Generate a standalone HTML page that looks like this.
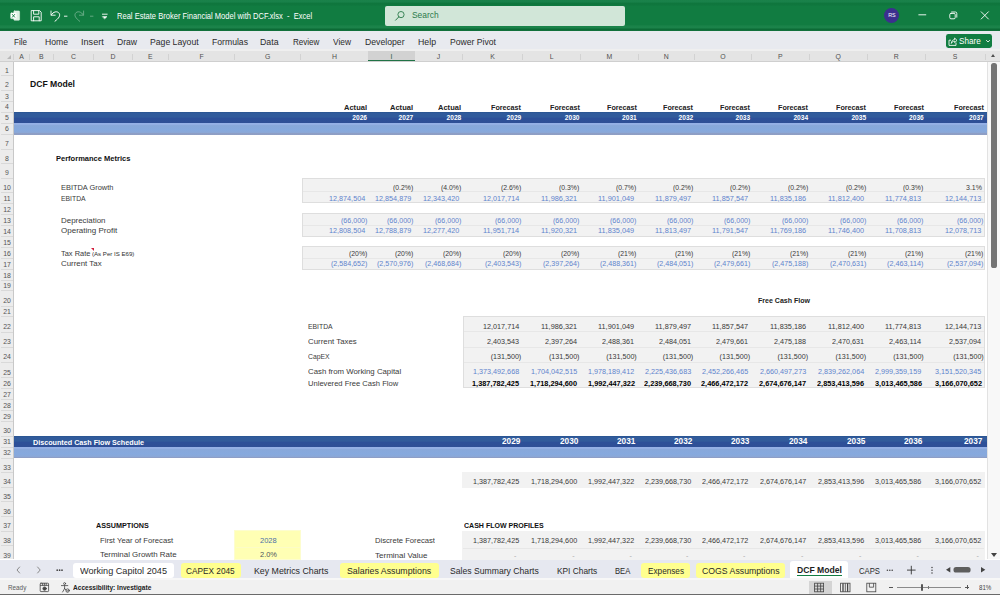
<!DOCTYPE html>
<html lang="en"><head><meta charset="utf-8"><title>Real Estate Broker Financial Model with DCF.xlsx - Excel</title>
<style>
html,body{margin:0;padding:0;}
body{width:1000px;height:595px;position:relative;overflow:hidden;background:#fff;font-family:"Liberation Sans",sans-serif;}
.t{position:absolute;white-space:pre;color:#333;transform-origin:0 50%;}
.b{position:absolute;}
div{position:absolute;left:0;top:0;}
#sheet{width:987px;height:559.5px;overflow:hidden;}
</style></head>
<body>
<div id="sheet">
<div class="b " style="left:13.50px;top:111.80px;width:973.50px;height:11.20px;background:linear-gradient(to bottom,#29548f 0,#315b9c 1.5px,#315b9b 5px,#2d5099 6.5px,#2f4f96 100%);"></div>
<div class="b " style="left:13.50px;top:123.00px;width:973.50px;height:11.50px;background:linear-gradient(to bottom,#95b1e7 0,#93afe4 1.5px,#88a8da 2.6px,#86a9de 7px,#8aa8d8 9.4px,#8d9ec6 10.4px,#8f9fc4 100%);"></div>
<div class="b " style="left:13.50px;top:435.80px;width:973.50px;height:11.00px;background:linear-gradient(to bottom,#29548f 0,#315b9c 1.5px,#315b9b 5px,#2d5099 6.5px,#2f4f96 100%);"></div>
<div class="b " style="left:13.50px;top:446.80px;width:973.50px;height:11.50px;background:linear-gradient(to bottom,#95b1e7 0,#93afe4 1.5px,#88a8da 2.6px,#86a9de 7px,#8aa8d8 9.4px,#8d9ec6 10.4px,#8f9fc4 100%);"></div>
<div class="b " style="left:301.70px;top:178.20px;width:683.30px;height:24.80px;background:#f2f2f2;border:1px solid #dedede;box-sizing:border-box;"></div>
<div class="b " style="left:302.70px;top:191.30px;width:681.30px;height:1.00px;background:#e7e7e7;"></div>
<div class="b " style="left:301.70px;top:213.40px;width:683.30px;height:23.30px;background:#f2f2f2;border:1px solid #dedede;box-sizing:border-box;"></div>
<div class="b " style="left:302.70px;top:225.10px;width:681.30px;height:1.00px;background:#e7e7e7;"></div>
<div class="b " style="left:301.70px;top:246.40px;width:683.30px;height:23.60px;background:#f2f2f2;border:1px solid #dedede;box-sizing:border-box;"></div>
<div class="b " style="left:302.70px;top:258.30px;width:681.30px;height:1.00px;background:#e7e7e7;"></div>
<div class="b " style="left:463.00px;top:316.20px;width:522.00px;height:71.70px;background:#f2f2f2;border:1px solid #dedede;box-sizing:border-box;"></div>
<div class="b " style="left:464.00px;top:331.10px;width:520.00px;height:1.00px;background:#e7e7e7;"></div>
<div class="b " style="left:464.00px;top:346.50px;width:520.00px;height:1.00px;background:#e7e7e7;"></div>
<div class="b " style="left:464.00px;top:361.80px;width:520.00px;height:1.00px;background:#e7e7e7;"></div>
<div class="b " style="left:462.00px;top:471.80px;width:523.00px;height:15.80px;background:#f2f2f2;"></div>
<div class="b " style="left:462.00px;top:531.20px;width:523.00px;height:29.30px;background:#f2f2f2;"></div>
<div class="b " style="left:463.00px;top:547.50px;width:521.00px;height:1.00px;background:#e7e7e7;"></div>
<div class="b " style="left:234.20px;top:530.20px;width:67.00px;height:30.30px;background:#ffffb4;border:1.5px solid #fdfdcf;box-sizing:border-box;"></div>
<div class="b " style="left:235.50px;top:547.00px;width:64.50px;height:1.00px;background:#fcfcc6;"></div>
<span class="t " style="left:30.40px;top:79.00px;font-size:9px;line-height:11.7px;transform:scaleX(0.957);color:#111;font-weight:700;">DCF Model</span>
<span class="t " style="left:55.60px;top:154.00px;font-size:7.4px;line-height:9.62px;transform:scaleX(1.017);color:#111;font-weight:700;">Performance Metrics</span>
<span class="t " style="left:344.05px;top:103.00px;font-size:7.7px;line-height:10.01px;transform:scaleX(0.979);color:#222;font-weight:700;">Actual</span>
<span class="t " style="left:390.30px;top:103.00px;font-size:7.7px;line-height:10.01px;transform:scaleX(0.979);color:#222;font-weight:700;">Actual</span>
<span class="t " style="left:438.30px;top:103.00px;font-size:7.7px;line-height:10.01px;transform:scaleX(0.979);color:#222;font-weight:700;">Actual</span>
<span class="t " style="left:491.30px;top:103.00px;font-size:7.7px;line-height:10.01px;transform:scaleX(0.936);color:#222;font-weight:700;">Forecast</span>
<span class="t " style="left:549.55px;top:103.00px;font-size:7.7px;line-height:10.01px;transform:scaleX(0.936);color:#222;font-weight:700;">Forecast</span>
<span class="t " style="left:606.80px;top:103.00px;font-size:7.7px;line-height:10.01px;transform:scaleX(0.936);color:#222;font-weight:700;">Forecast</span>
<span class="t " style="left:663.30px;top:103.00px;font-size:7.7px;line-height:10.01px;transform:scaleX(0.936);color:#222;font-weight:700;">Forecast</span>
<span class="t " style="left:720.20px;top:103.00px;font-size:7.7px;line-height:10.01px;transform:scaleX(0.936);color:#222;font-weight:700;">Forecast</span>
<span class="t " style="left:778.10px;top:103.00px;font-size:7.7px;line-height:10.01px;transform:scaleX(0.936);color:#222;font-weight:700;">Forecast</span>
<span class="t " style="left:836.10px;top:103.00px;font-size:7.7px;line-height:10.01px;transform:scaleX(0.936);color:#222;font-weight:700;">Forecast</span>
<span class="t " style="left:893.80px;top:103.00px;font-size:7.7px;line-height:10.01px;transform:scaleX(0.936);color:#222;font-weight:700;">Forecast</span>
<span class="t " style="left:953.80px;top:103.00px;font-size:7.7px;line-height:10.01px;transform:scaleX(0.936);color:#222;font-weight:700;">Forecast</span>
<span class="t " style="left:352.35px;top:114.00px;font-size:6.6px;line-height:8.58px;color:#fff;font-weight:700;">2026</span>
<span class="t " style="left:398.60px;top:114.00px;font-size:6.6px;line-height:8.58px;color:#fff;font-weight:700;">2027</span>
<span class="t " style="left:446.60px;top:114.00px;font-size:6.6px;line-height:8.58px;color:#fff;font-weight:700;">2028</span>
<span class="t " style="left:506.60px;top:114.00px;font-size:6.6px;line-height:8.58px;color:#fff;font-weight:700;">2029</span>
<span class="t " style="left:564.85px;top:114.00px;font-size:6.6px;line-height:8.58px;color:#fff;font-weight:700;">2030</span>
<span class="t " style="left:622.10px;top:114.00px;font-size:6.6px;line-height:8.58px;color:#fff;font-weight:700;">2031</span>
<span class="t " style="left:678.60px;top:114.00px;font-size:6.6px;line-height:8.58px;color:#fff;font-weight:700;">2032</span>
<span class="t " style="left:735.50px;top:114.00px;font-size:6.6px;line-height:8.58px;color:#fff;font-weight:700;">2033</span>
<span class="t " style="left:793.40px;top:114.00px;font-size:6.6px;line-height:8.58px;color:#fff;font-weight:700;">2034</span>
<span class="t " style="left:851.40px;top:114.00px;font-size:6.6px;line-height:8.58px;color:#fff;font-weight:700;">2035</span>
<span class="t " style="left:909.10px;top:114.00px;font-size:6.6px;line-height:8.58px;color:#fff;font-weight:700;">2036</span>
<span class="t " style="left:969.10px;top:114.00px;font-size:6.6px;line-height:8.58px;color:#fff;font-weight:700;">2037</span>
<span class="t " style="left:60.60px;top:184.00px;font-size:7.15px;line-height:9.29px;transform:scaleX(1.040);color:#3a3a3a;">EBITDA Growth</span>
<span class="t " style="left:60.60px;top:195.00px;font-size:7.15px;line-height:9.29px;transform:scaleX(0.957);color:#3a3a3a;">EBITDA</span>
<span class="t " style="left:60.60px;top:217.00px;font-size:7.15px;line-height:9.29px;transform:scaleX(1.110);color:#3a3a3a;">Depreciation</span>
<span class="t " style="left:60.60px;top:227.00px;font-size:7.15px;line-height:9.29px;transform:scaleX(1.124);color:#3a3a3a;">Operating Profit</span>
<span class="t " style="left:60.60px;top:250.00px;font-size:7.15px;line-height:9.29px;transform:scaleX(1.043);color:#3a3a3a;">Tax Rate</span>
<span class="t " style="left:92.40px;top:251.00px;font-size:5.9px;line-height:7.67px;transform:scaleX(1.034);color:#2e2e2e;">(As Per IS E69)</span>
<span class="t " style="left:60.60px;top:260.00px;font-size:7.15px;line-height:9.29px;transform:scaleX(1.104);color:#3a3a3a;">Current Tax</span>
<div class="b" style="left:90.7px;top:247.6px;width:0;height:0;border-left:3.1px solid transparent;border-top:3.1px solid #d21f3c;"></div>
<span class="t " style="left:392.97px;top:184.00px;font-size:7.15px;line-height:9.29px;transform:scaleX(0.961);color:#3a3a3a;">(0.2%)</span>
<span class="t " style="left:440.97px;top:184.00px;font-size:7.15px;line-height:9.29px;transform:scaleX(0.961);color:#3a3a3a;">(4.0%)</span>
<span class="t " style="left:500.97px;top:184.00px;font-size:7.15px;line-height:9.29px;transform:scaleX(0.961);color:#3a3a3a;">(2.6%)</span>
<span class="t " style="left:559.22px;top:184.00px;font-size:7.15px;line-height:9.29px;transform:scaleX(0.961);color:#3a3a3a;">(0.3%)</span>
<span class="t " style="left:616.47px;top:184.00px;font-size:7.15px;line-height:9.29px;transform:scaleX(0.961);color:#3a3a3a;">(0.7%)</span>
<span class="t " style="left:672.97px;top:184.00px;font-size:7.15px;line-height:9.29px;transform:scaleX(0.961);color:#3a3a3a;">(0.2%)</span>
<span class="t " style="left:729.87px;top:184.00px;font-size:7.15px;line-height:9.29px;transform:scaleX(0.961);color:#3a3a3a;">(0.2%)</span>
<span class="t " style="left:787.77px;top:184.00px;font-size:7.15px;line-height:9.29px;transform:scaleX(0.961);color:#3a3a3a;">(0.2%)</span>
<span class="t " style="left:845.77px;top:184.00px;font-size:7.15px;line-height:9.29px;transform:scaleX(0.961);color:#3a3a3a;">(0.2%)</span>
<span class="t " style="left:903.47px;top:184.00px;font-size:7.15px;line-height:9.29px;transform:scaleX(0.961);color:#3a3a3a;">(0.3%)</span>
<span class="t " style="left:965.61px;top:184.00px;font-size:7.15px;line-height:9.29px;transform:scaleX(0.982);color:#3a3a3a;">3.1%</span>
<span class="t " style="left:328.63px;top:195.00px;font-size:7.15px;line-height:9.29px;transform:scaleX(1.013);color:#5f84cd;">12,874,504</span>
<span class="t " style="left:374.88px;top:195.00px;font-size:7.15px;line-height:9.29px;transform:scaleX(1.013);color:#5f84cd;">12,854,879</span>
<span class="t " style="left:422.88px;top:195.00px;font-size:7.15px;line-height:9.29px;transform:scaleX(1.013);color:#5f84cd;">12,343,420</span>
<span class="t " style="left:482.88px;top:195.00px;font-size:7.15px;line-height:9.29px;transform:scaleX(1.013);color:#5f84cd;">12,017,714</span>
<span class="t " style="left:541.13px;top:195.00px;font-size:7.15px;line-height:9.29px;transform:scaleX(1.028);color:#5f84cd;">11,986,321</span>
<span class="t " style="left:598.38px;top:195.00px;font-size:7.15px;line-height:9.29px;transform:scaleX(1.028);color:#5f84cd;">11,901,049</span>
<span class="t " style="left:654.88px;top:195.00px;font-size:7.15px;line-height:9.29px;transform:scaleX(1.028);color:#5f84cd;">11,879,497</span>
<span class="t " style="left:711.78px;top:195.00px;font-size:7.15px;line-height:9.29px;transform:scaleX(1.028);color:#5f84cd;">11,857,547</span>
<span class="t " style="left:769.68px;top:195.00px;font-size:7.15px;line-height:9.29px;transform:scaleX(1.028);color:#5f84cd;">11,835,186</span>
<span class="t " style="left:827.68px;top:195.00px;font-size:7.15px;line-height:9.29px;transform:scaleX(1.028);color:#5f84cd;">11,812,400</span>
<span class="t " style="left:885.38px;top:195.00px;font-size:7.15px;line-height:9.29px;transform:scaleX(1.028);color:#5f84cd;">11,774,813</span>
<span class="t " style="left:945.38px;top:195.00px;font-size:7.15px;line-height:9.29px;transform:scaleX(1.013);color:#5f84cd;">12,144,713</span>
<span class="t " style="left:340.52px;top:217.00px;font-size:7.15px;line-height:9.29px;transform:scaleX(0.993);color:#5f84cd;">(66,000)</span>
<span class="t " style="left:386.77px;top:217.00px;font-size:7.15px;line-height:9.29px;transform:scaleX(0.993);color:#5f84cd;">(66,000)</span>
<span class="t " style="left:434.77px;top:217.00px;font-size:7.15px;line-height:9.29px;transform:scaleX(0.993);color:#5f84cd;">(66,000)</span>
<span class="t " style="left:494.77px;top:217.00px;font-size:7.15px;line-height:9.29px;transform:scaleX(0.993);color:#5f84cd;">(66,000)</span>
<span class="t " style="left:553.02px;top:217.00px;font-size:7.15px;line-height:9.29px;transform:scaleX(0.993);color:#5f84cd;">(66,000)</span>
<span class="t " style="left:610.27px;top:217.00px;font-size:7.15px;line-height:9.29px;transform:scaleX(0.993);color:#5f84cd;">(66,000)</span>
<span class="t " style="left:666.77px;top:217.00px;font-size:7.15px;line-height:9.29px;transform:scaleX(0.993);color:#5f84cd;">(66,000)</span>
<span class="t " style="left:723.67px;top:217.00px;font-size:7.15px;line-height:9.29px;transform:scaleX(0.993);color:#5f84cd;">(66,000)</span>
<span class="t " style="left:781.57px;top:217.00px;font-size:7.15px;line-height:9.29px;transform:scaleX(0.993);color:#5f84cd;">(66,000)</span>
<span class="t " style="left:839.57px;top:217.00px;font-size:7.15px;line-height:9.29px;transform:scaleX(0.993);color:#5f84cd;">(66,000)</span>
<span class="t " style="left:897.27px;top:217.00px;font-size:7.15px;line-height:9.29px;transform:scaleX(0.993);color:#5f84cd;">(66,000)</span>
<span class="t " style="left:957.27px;top:217.00px;font-size:7.15px;line-height:9.29px;transform:scaleX(0.993);color:#5f84cd;">(66,000)</span>
<span class="t " style="left:328.63px;top:227.00px;font-size:7.15px;line-height:9.29px;transform:scaleX(1.013);color:#5f84cd;">12,808,504</span>
<span class="t " style="left:374.88px;top:227.00px;font-size:7.15px;line-height:9.29px;transform:scaleX(1.013);color:#5f84cd;">12,788,879</span>
<span class="t " style="left:422.88px;top:227.00px;font-size:7.15px;line-height:9.29px;transform:scaleX(1.013);color:#5f84cd;">12,277,420</span>
<span class="t " style="left:482.88px;top:227.00px;font-size:7.15px;line-height:9.29px;transform:scaleX(1.028);color:#5f84cd;">11,951,714</span>
<span class="t " style="left:541.13px;top:227.00px;font-size:7.15px;line-height:9.29px;transform:scaleX(1.028);color:#5f84cd;">11,920,321</span>
<span class="t " style="left:598.38px;top:227.00px;font-size:7.15px;line-height:9.29px;transform:scaleX(1.028);color:#5f84cd;">11,835,049</span>
<span class="t " style="left:654.88px;top:227.00px;font-size:7.15px;line-height:9.29px;transform:scaleX(1.028);color:#5f84cd;">11,813,497</span>
<span class="t " style="left:711.78px;top:227.00px;font-size:7.15px;line-height:9.29px;transform:scaleX(1.028);color:#5f84cd;">11,791,547</span>
<span class="t " style="left:769.68px;top:227.00px;font-size:7.15px;line-height:9.29px;transform:scaleX(1.028);color:#5f84cd;">11,769,186</span>
<span class="t " style="left:827.68px;top:227.00px;font-size:7.15px;line-height:9.29px;transform:scaleX(1.028);color:#5f84cd;">11,746,400</span>
<span class="t " style="left:885.38px;top:227.00px;font-size:7.15px;line-height:9.29px;transform:scaleX(1.028);color:#5f84cd;">11,708,813</span>
<span class="t " style="left:945.38px;top:227.00px;font-size:7.15px;line-height:9.29px;transform:scaleX(1.013);color:#5f84cd;">12,078,713</span>
<span class="t " style="left:348.62px;top:250.00px;font-size:7.15px;line-height:9.29px;transform:scaleX(0.961);color:#3a3a3a;">(20%)</span>
<span class="t " style="left:394.87px;top:250.00px;font-size:7.15px;line-height:9.29px;transform:scaleX(0.961);color:#3a3a3a;">(20%)</span>
<span class="t " style="left:442.87px;top:250.00px;font-size:7.15px;line-height:9.29px;transform:scaleX(0.961);color:#3a3a3a;">(20%)</span>
<span class="t " style="left:502.87px;top:250.00px;font-size:7.15px;line-height:9.29px;transform:scaleX(0.961);color:#3a3a3a;">(20%)</span>
<span class="t " style="left:561.12px;top:250.00px;font-size:7.15px;line-height:9.29px;transform:scaleX(0.961);color:#3a3a3a;">(20%)</span>
<span class="t " style="left:618.37px;top:250.00px;font-size:7.15px;line-height:9.29px;transform:scaleX(0.961);color:#3a3a3a;">(21%)</span>
<span class="t " style="left:674.87px;top:250.00px;font-size:7.15px;line-height:9.29px;transform:scaleX(0.961);color:#3a3a3a;">(21%)</span>
<span class="t " style="left:731.77px;top:250.00px;font-size:7.15px;line-height:9.29px;transform:scaleX(0.961);color:#3a3a3a;">(21%)</span>
<span class="t " style="left:789.67px;top:250.00px;font-size:7.15px;line-height:9.29px;transform:scaleX(0.961);color:#3a3a3a;">(21%)</span>
<span class="t " style="left:847.67px;top:250.00px;font-size:7.15px;line-height:9.29px;transform:scaleX(0.961);color:#3a3a3a;">(21%)</span>
<span class="t " style="left:905.37px;top:250.00px;font-size:7.15px;line-height:9.29px;transform:scaleX(0.961);color:#3a3a3a;">(21%)</span>
<span class="t " style="left:965.37px;top:250.00px;font-size:7.15px;line-height:9.29px;transform:scaleX(0.961);color:#3a3a3a;">(21%)</span>
<span class="t " style="left:330.59px;top:260.00px;font-size:7.15px;line-height:9.29px;transform:scaleX(0.995);color:#5f84cd;">(2,584,652)</span>
<span class="t " style="left:376.84px;top:260.00px;font-size:7.15px;line-height:9.29px;transform:scaleX(0.995);color:#5f84cd;">(2,570,976)</span>
<span class="t " style="left:424.84px;top:260.00px;font-size:7.15px;line-height:9.29px;transform:scaleX(0.995);color:#5f84cd;">(2,468,684)</span>
<span class="t " style="left:484.84px;top:260.00px;font-size:7.15px;line-height:9.29px;transform:scaleX(0.995);color:#5f84cd;">(2,403,543)</span>
<span class="t " style="left:543.09px;top:260.00px;font-size:7.15px;line-height:9.29px;transform:scaleX(0.995);color:#5f84cd;">(2,397,264)</span>
<span class="t " style="left:600.34px;top:260.00px;font-size:7.15px;line-height:9.29px;transform:scaleX(0.995);color:#5f84cd;">(2,488,361)</span>
<span class="t " style="left:656.84px;top:260.00px;font-size:7.15px;line-height:9.29px;transform:scaleX(0.995);color:#5f84cd;">(2,484,051)</span>
<span class="t " style="left:713.74px;top:260.00px;font-size:7.15px;line-height:9.29px;transform:scaleX(0.995);color:#5f84cd;">(2,479,661)</span>
<span class="t " style="left:771.64px;top:260.00px;font-size:7.15px;line-height:9.29px;transform:scaleX(0.995);color:#5f84cd;">(2,475,188)</span>
<span class="t " style="left:829.64px;top:260.00px;font-size:7.15px;line-height:9.29px;transform:scaleX(0.995);color:#5f84cd;">(2,470,631)</span>
<span class="t " style="left:887.34px;top:260.00px;font-size:7.15px;line-height:9.29px;transform:scaleX(1.010);color:#5f84cd;">(2,463,114)</span>
<span class="t " style="left:947.34px;top:260.00px;font-size:7.15px;line-height:9.29px;transform:scaleX(0.995);color:#5f84cd;">(2,537,094)</span>
<span class="t " style="left:758.20px;top:296.00px;font-size:7.2px;line-height:9.36px;transform:scaleX(0.979);color:#222;font-weight:700;">Free Cash Flow</span>
<span class="t " style="left:307.90px;top:323.00px;font-size:7.15px;line-height:9.29px;transform:scaleX(0.954);color:#3a3a3a;">EBITDA</span>
<span class="t " style="left:307.90px;top:338.00px;font-size:7.15px;line-height:9.29px;transform:scaleX(1.101);color:#3a3a3a;">Current Taxes</span>
<span class="t " style="left:307.90px;top:353.00px;font-size:7.15px;line-height:9.29px;transform:scaleX(0.955);color:#3a3a3a;">CapEX</span>
<span class="t " style="left:307.90px;top:368.00px;font-size:7.15px;line-height:9.29px;transform:scaleX(1.094);color:#3a3a3a;">Cash from Working Capital</span>
<span class="t " style="left:307.90px;top:380.00px;font-size:7.15px;line-height:9.29px;transform:scaleX(1.062);color:#3a3a3a;">Unlevered Free Cash Flow</span>
<span class="t " style="left:482.88px;top:323.00px;font-size:7.15px;line-height:9.29px;transform:scaleX(1.013);color:#3a3a3a;">12,017,714</span>
<span class="t " style="left:541.13px;top:323.00px;font-size:7.15px;line-height:9.29px;transform:scaleX(1.028);color:#3a3a3a;">11,986,321</span>
<span class="t " style="left:598.38px;top:323.00px;font-size:7.15px;line-height:9.29px;transform:scaleX(1.028);color:#3a3a3a;">11,901,049</span>
<span class="t " style="left:654.88px;top:323.00px;font-size:7.15px;line-height:9.29px;transform:scaleX(1.028);color:#3a3a3a;">11,879,497</span>
<span class="t " style="left:711.78px;top:323.00px;font-size:7.15px;line-height:9.29px;transform:scaleX(1.028);color:#3a3a3a;">11,857,547</span>
<span class="t " style="left:769.68px;top:323.00px;font-size:7.15px;line-height:9.29px;transform:scaleX(1.028);color:#3a3a3a;">11,835,186</span>
<span class="t " style="left:827.68px;top:323.00px;font-size:7.15px;line-height:9.29px;transform:scaleX(1.028);color:#3a3a3a;">11,812,400</span>
<span class="t " style="left:885.38px;top:323.00px;font-size:7.15px;line-height:9.29px;transform:scaleX(1.028);color:#3a3a3a;">11,774,813</span>
<span class="t " style="left:945.38px;top:323.00px;font-size:7.15px;line-height:9.29px;transform:scaleX(1.013);color:#3a3a3a;">12,144,713</span>
<span class="t " style="left:486.97px;top:338.00px;font-size:7.15px;line-height:9.29px;transform:scaleX(1.011);color:#3a3a3a;">2,403,543</span>
<span class="t " style="left:545.22px;top:338.00px;font-size:7.15px;line-height:9.29px;transform:scaleX(1.011);color:#3a3a3a;">2,397,264</span>
<span class="t " style="left:602.47px;top:338.00px;font-size:7.15px;line-height:9.29px;transform:scaleX(1.011);color:#3a3a3a;">2,488,361</span>
<span class="t " style="left:658.97px;top:338.00px;font-size:7.15px;line-height:9.29px;transform:scaleX(1.011);color:#3a3a3a;">2,484,051</span>
<span class="t " style="left:715.87px;top:338.00px;font-size:7.15px;line-height:9.29px;transform:scaleX(1.011);color:#3a3a3a;">2,479,661</span>
<span class="t " style="left:773.77px;top:338.00px;font-size:7.15px;line-height:9.29px;transform:scaleX(1.011);color:#3a3a3a;">2,475,188</span>
<span class="t " style="left:831.77px;top:338.00px;font-size:7.15px;line-height:9.29px;transform:scaleX(1.011);color:#3a3a3a;">2,470,631</span>
<span class="t " style="left:889.47px;top:338.00px;font-size:7.15px;line-height:9.29px;transform:scaleX(1.028);color:#3a3a3a;">2,463,114</span>
<span class="t " style="left:949.47px;top:338.00px;font-size:7.15px;line-height:9.29px;transform:scaleX(1.011);color:#3a3a3a;">2,537,094</span>
<span class="t " style="left:490.68px;top:353.00px;font-size:7.15px;line-height:9.29px;color:#3a3a3a;">(131,500)</span>
<span class="t " style="left:548.93px;top:353.00px;font-size:7.15px;line-height:9.29px;color:#3a3a3a;">(131,500)</span>
<span class="t " style="left:606.18px;top:353.00px;font-size:7.15px;line-height:9.29px;color:#3a3a3a;">(131,500)</span>
<span class="t " style="left:662.68px;top:353.00px;font-size:7.15px;line-height:9.29px;color:#3a3a3a;">(131,500)</span>
<span class="t " style="left:719.58px;top:353.00px;font-size:7.15px;line-height:9.29px;color:#3a3a3a;">(131,500)</span>
<span class="t " style="left:777.48px;top:353.00px;font-size:7.15px;line-height:9.29px;color:#3a3a3a;">(131,500)</span>
<span class="t " style="left:835.48px;top:353.00px;font-size:7.15px;line-height:9.29px;color:#3a3a3a;">(131,500)</span>
<span class="t " style="left:893.18px;top:353.00px;font-size:7.15px;line-height:9.29px;color:#3a3a3a;">(131,500)</span>
<span class="t " style="left:953.18px;top:353.00px;font-size:7.15px;line-height:9.29px;color:#3a3a3a;">(131,500)</span>
<span class="t " style="left:472.95px;top:368.00px;font-size:7.15px;line-height:9.29px;transform:scaleX(1.011);color:#5f84cd;">1,373,492,668</span>
<span class="t " style="left:531.20px;top:368.00px;font-size:7.15px;line-height:9.29px;transform:scaleX(1.011);color:#5f84cd;">1,704,042,515</span>
<span class="t " style="left:588.45px;top:368.00px;font-size:7.15px;line-height:9.29px;transform:scaleX(1.011);color:#5f84cd;">1,978,189,412</span>
<span class="t " style="left:644.95px;top:368.00px;font-size:7.15px;line-height:9.29px;transform:scaleX(1.011);color:#5f84cd;">2,225,436,683</span>
<span class="t " style="left:701.85px;top:368.00px;font-size:7.15px;line-height:9.29px;transform:scaleX(1.011);color:#5f84cd;">2,452,266,465</span>
<span class="t " style="left:759.75px;top:368.00px;font-size:7.15px;line-height:9.29px;transform:scaleX(1.011);color:#5f84cd;">2,660,497,273</span>
<span class="t " style="left:817.75px;top:368.00px;font-size:7.15px;line-height:9.29px;transform:scaleX(1.011);color:#5f84cd;">2,839,262,064</span>
<span class="t " style="left:875.45px;top:368.00px;font-size:7.15px;line-height:9.29px;transform:scaleX(1.011);color:#5f84cd;">2,999,359,159</span>
<span class="t " style="left:935.45px;top:368.00px;font-size:7.15px;line-height:9.29px;transform:scaleX(1.011);color:#5f84cd;">3,151,520,345</span>
<span class="t " style="left:472.09px;top:380.00px;font-size:7.15px;line-height:9.29px;transform:scaleX(1.029);color:#000;font-weight:700;">1,387,782,425</span>
<span class="t " style="left:530.34px;top:380.00px;font-size:7.15px;line-height:9.29px;transform:scaleX(1.029);color:#000;font-weight:700;">1,718,294,600</span>
<span class="t " style="left:587.59px;top:380.00px;font-size:7.15px;line-height:9.29px;transform:scaleX(1.029);color:#000;font-weight:700;">1,992,447,322</span>
<span class="t " style="left:644.09px;top:380.00px;font-size:7.15px;line-height:9.29px;transform:scaleX(1.029);color:#000;font-weight:700;">2,239,668,730</span>
<span class="t " style="left:700.99px;top:380.00px;font-size:7.15px;line-height:9.29px;transform:scaleX(1.029);color:#000;font-weight:700;">2,466,472,172</span>
<span class="t " style="left:758.89px;top:380.00px;font-size:7.15px;line-height:9.29px;transform:scaleX(1.029);color:#000;font-weight:700;">2,674,676,147</span>
<span class="t " style="left:816.89px;top:380.00px;font-size:7.15px;line-height:9.29px;transform:scaleX(1.029);color:#000;font-weight:700;">2,853,413,596</span>
<span class="t " style="left:874.59px;top:380.00px;font-size:7.15px;line-height:9.29px;transform:scaleX(1.029);color:#000;font-weight:700;">3,013,465,586</span>
<span class="t " style="left:934.59px;top:380.00px;font-size:7.15px;line-height:9.29px;transform:scaleX(1.029);color:#000;font-weight:700;">3,166,070,652</span>
<span class="t " style="left:32.60px;top:438.00px;font-size:7.3px;line-height:9.49px;transform:scaleX(0.985);color:#fff;font-weight:700;">Discounted Cash Flow Schedule</span>
<span class="t " style="left:501.90px;top:437.00px;font-size:8.2px;line-height:10.66px;transform:scaleX(1.010);color:#fff;font-weight:700;">2029</span>
<span class="t " style="left:560.15px;top:437.00px;font-size:8.2px;line-height:10.66px;transform:scaleX(1.010);color:#fff;font-weight:700;">2030</span>
<span class="t " style="left:617.40px;top:437.00px;font-size:8.2px;line-height:10.66px;transform:scaleX(1.010);color:#fff;font-weight:700;">2031</span>
<span class="t " style="left:673.90px;top:437.00px;font-size:8.2px;line-height:10.66px;transform:scaleX(1.010);color:#fff;font-weight:700;">2032</span>
<span class="t " style="left:730.80px;top:437.00px;font-size:8.2px;line-height:10.66px;transform:scaleX(1.010);color:#fff;font-weight:700;">2033</span>
<span class="t " style="left:788.70px;top:437.00px;font-size:8.2px;line-height:10.66px;transform:scaleX(1.010);color:#fff;font-weight:700;">2034</span>
<span class="t " style="left:846.70px;top:437.00px;font-size:8.2px;line-height:10.66px;transform:scaleX(1.010);color:#fff;font-weight:700;">2035</span>
<span class="t " style="left:904.40px;top:437.00px;font-size:8.2px;line-height:10.66px;transform:scaleX(1.010);color:#fff;font-weight:700;">2036</span>
<span class="t " style="left:964.40px;top:437.00px;font-size:8.2px;line-height:10.66px;transform:scaleX(1.010);color:#fff;font-weight:700;">2037</span>
<span class="t " style="left:472.95px;top:478.00px;font-size:7.15px;line-height:9.29px;transform:scaleX(1.011);color:#3a3a3a;">1,387,782,425</span>
<span class="t " style="left:531.20px;top:478.00px;font-size:7.15px;line-height:9.29px;transform:scaleX(1.011);color:#3a3a3a;">1,718,294,600</span>
<span class="t " style="left:588.45px;top:478.00px;font-size:7.15px;line-height:9.29px;transform:scaleX(1.011);color:#3a3a3a;">1,992,447,322</span>
<span class="t " style="left:644.95px;top:478.00px;font-size:7.15px;line-height:9.29px;transform:scaleX(1.011);color:#3a3a3a;">2,239,668,730</span>
<span class="t " style="left:701.85px;top:478.00px;font-size:7.15px;line-height:9.29px;transform:scaleX(1.011);color:#3a3a3a;">2,466,472,172</span>
<span class="t " style="left:759.75px;top:478.00px;font-size:7.15px;line-height:9.29px;transform:scaleX(1.011);color:#3a3a3a;">2,674,676,147</span>
<span class="t " style="left:817.75px;top:478.00px;font-size:7.15px;line-height:9.29px;transform:scaleX(1.011);color:#3a3a3a;">2,853,413,596</span>
<span class="t " style="left:875.45px;top:478.00px;font-size:7.15px;line-height:9.29px;transform:scaleX(1.011);color:#3a3a3a;">3,013,465,586</span>
<span class="t " style="left:935.45px;top:478.00px;font-size:7.15px;line-height:9.29px;transform:scaleX(1.011);color:#3a3a3a;">3,166,070,652</span>
<span class="t " style="left:95.60px;top:521.00px;font-size:7.3px;line-height:9.49px;transform:scaleX(0.987);color:#111;font-weight:700;">ASSUMPTIONS</span>
<span class="t " style="left:463.90px;top:521.00px;font-size:7.3px;line-height:9.49px;transform:scaleX(0.964);color:#111;font-weight:700;">CASH FLOW PROFILES</span>
<span class="t " style="left:100.40px;top:537.00px;font-size:7.15px;line-height:9.29px;transform:scaleX(1.078);color:#3a3a3a;">First Year of Forecast</span>
<span class="t " style="left:100.40px;top:551.00px;font-size:7.15px;line-height:9.29px;transform:scaleX(1.109);color:#3a3a3a;">Terminal Growth Rate</span>
<span class="t " style="left:260.05px;top:537.00px;font-size:7.15px;line-height:9.29px;transform:scaleX(1.051);color:#4d6fa6;">2028</span>
<span class="t " style="left:259.90px;top:551.00px;font-size:7.15px;line-height:9.29px;transform:scaleX(1.044);color:#4c5560;">2.0%</span>
<span class="t " style="left:374.60px;top:537.00px;font-size:7.15px;line-height:9.29px;transform:scaleX(1.071);color:#3a3a3a;">Discrete Forecast</span>
<span class="t " style="left:374.60px;top:552.00px;font-size:7.15px;line-height:9.29px;transform:scaleX(1.122);color:#3a3a3a;">Terminal Value</span>
<span class="t " style="left:472.95px;top:537.00px;font-size:7.15px;line-height:9.29px;transform:scaleX(1.011);color:#3a3a3a;">1,387,782,425</span>
<span class="t " style="left:531.20px;top:537.00px;font-size:7.15px;line-height:9.29px;transform:scaleX(1.011);color:#3a3a3a;">1,718,294,600</span>
<span class="t " style="left:588.45px;top:537.00px;font-size:7.15px;line-height:9.29px;transform:scaleX(1.011);color:#3a3a3a;">1,992,447,322</span>
<span class="t " style="left:644.95px;top:537.00px;font-size:7.15px;line-height:9.29px;transform:scaleX(1.011);color:#3a3a3a;">2,239,668,730</span>
<span class="t " style="left:701.85px;top:537.00px;font-size:7.15px;line-height:9.29px;transform:scaleX(1.011);color:#3a3a3a;">2,466,472,172</span>
<span class="t " style="left:759.75px;top:537.00px;font-size:7.15px;line-height:9.29px;transform:scaleX(1.011);color:#3a3a3a;">2,674,676,147</span>
<span class="t " style="left:817.75px;top:537.00px;font-size:7.15px;line-height:9.29px;transform:scaleX(1.011);color:#3a3a3a;">2,853,413,596</span>
<span class="t " style="left:875.45px;top:537.00px;font-size:7.15px;line-height:9.29px;transform:scaleX(1.011);color:#3a3a3a;">3,013,465,586</span>
<span class="t " style="left:935.45px;top:537.00px;font-size:7.15px;line-height:9.29px;transform:scaleX(1.011);color:#3a3a3a;">3,166,070,652</span>
<span class="t " style="left:514.11px;top:552.00px;font-size:7.15px;line-height:9.29px;color:#aaa;">-</span>
<span class="t " style="left:572.36px;top:552.00px;font-size:7.15px;line-height:9.29px;color:#aaa;">-</span>
<span class="t " style="left:629.61px;top:552.00px;font-size:7.15px;line-height:9.29px;color:#aaa;">-</span>
<span class="t " style="left:686.11px;top:552.00px;font-size:7.15px;line-height:9.29px;color:#aaa;">-</span>
<span class="t " style="left:743.01px;top:552.00px;font-size:7.15px;line-height:9.29px;color:#aaa;">-</span>
<span class="t " style="left:800.91px;top:552.00px;font-size:7.15px;line-height:9.29px;color:#aaa;">-</span>
<span class="t " style="left:858.91px;top:552.00px;font-size:7.15px;line-height:9.29px;color:#aaa;">-</span>
<span class="t " style="left:916.61px;top:552.00px;font-size:7.15px;line-height:9.29px;color:#aaa;">-</span>
<span class="t " style="left:976.61px;top:552.00px;font-size:7.15px;line-height:9.29px;color:#aaa;">-</span>
</div>
<div id="colhdr">
<div class="b " style="left:0.00px;top:48.80px;width:1000.00px;height:12.80px;background:#e4e4e4;border-top:2.6px solid #efefef;border-bottom:1px solid #cfcfcf;box-sizing:border-box;"></div>
<div class="b " style="left:368.25px;top:51.00px;width:46.25px;height:10.00px;background:#d2d2d2;border-bottom:1.6px solid #217346;box-sizing:border-box;"></div>
<div class="b " style="left:29.00px;top:53.50px;width:1.00px;height:6.50px;background:#d2d2d2;"></div>
<span class="t ch" style="left:19.20px;top:53.00px;font-size:6.9px;line-height:8.97px;color:#505050;">A</span>
<div class="b " style="left:52.50px;top:53.50px;width:1.00px;height:6.50px;background:#d2d2d2;"></div>
<span class="t ch" style="left:38.95px;top:53.00px;font-size:6.9px;line-height:8.97px;color:#505050;">B</span>
<div class="b " style="left:93.25px;top:53.50px;width:1.00px;height:6.50px;background:#d2d2d2;"></div>
<span class="t ch" style="left:70.88px;top:53.00px;font-size:6.9px;line-height:8.97px;color:#505050;">C</span>
<div class="b " style="left:131.50px;top:53.50px;width:1.00px;height:6.50px;background:#d2d2d2;"></div>
<span class="t ch" style="left:110.38px;top:53.00px;font-size:6.9px;line-height:8.97px;color:#505050;">D</span>
<div class="b " style="left:168.25px;top:53.50px;width:1.00px;height:6.50px;background:#d2d2d2;"></div>
<span class="t ch" style="left:148.07px;top:53.00px;font-size:6.9px;line-height:8.97px;color:#505050;">E</span>
<div class="b " style="left:234.00px;top:53.50px;width:1.00px;height:6.50px;background:#d2d2d2;"></div>
<span class="t ch" style="left:199.52px;top:53.00px;font-size:6.9px;line-height:8.97px;color:#505050;">F</span>
<div class="b " style="left:300.25px;top:53.50px;width:1.00px;height:6.50px;background:#d2d2d2;"></div>
<span class="t ch" style="left:264.94px;top:53.00px;font-size:6.9px;line-height:8.97px;color:#505050;">G</span>
<div class="b " style="left:367.75px;top:53.50px;width:1.00px;height:6.50px;background:#d2d2d2;"></div>
<span class="t ch" style="left:332.01px;top:53.00px;font-size:6.9px;line-height:8.97px;color:#505050;">H</span>
<div class="b " style="left:414.00px;top:53.50px;width:1.00px;height:6.50px;background:#d2d2d2;"></div>
<span class="t ch" style="left:390.41px;top:53.00px;font-size:6.9px;line-height:8.97px;color:#1e5c3a;">I</span>
<div class="b " style="left:462.00px;top:53.50px;width:1.00px;height:6.50px;background:#d2d2d2;"></div>
<span class="t ch" style="left:436.77px;top:53.00px;font-size:6.9px;line-height:8.97px;color:#505050;">J</span>
<div class="b " style="left:522.00px;top:53.50px;width:1.00px;height:6.50px;background:#d2d2d2;"></div>
<span class="t ch" style="left:490.20px;top:53.00px;font-size:6.9px;line-height:8.97px;color:#505050;">K</span>
<div class="b " style="left:580.25px;top:53.50px;width:1.00px;height:6.50px;background:#d2d2d2;"></div>
<span class="t ch" style="left:549.70px;top:53.00px;font-size:6.9px;line-height:8.97px;color:#505050;">L</span>
<div class="b " style="left:637.50px;top:53.50px;width:1.00px;height:6.50px;background:#d2d2d2;"></div>
<span class="t ch" style="left:606.50px;top:53.00px;font-size:6.9px;line-height:8.97px;color:#505050;">M</span>
<div class="b " style="left:694.00px;top:53.50px;width:1.00px;height:6.50px;background:#d2d2d2;"></div>
<span class="t ch" style="left:663.76px;top:53.00px;font-size:6.9px;line-height:8.97px;color:#505050;">N</span>
<div class="b " style="left:750.90px;top:53.50px;width:1.00px;height:6.50px;background:#d2d2d2;"></div>
<span class="t ch" style="left:720.26px;top:53.00px;font-size:6.9px;line-height:8.97px;color:#505050;">O</span>
<div class="b " style="left:808.80px;top:53.50px;width:1.00px;height:6.50px;background:#d2d2d2;"></div>
<span class="t ch" style="left:778.05px;top:53.00px;font-size:6.9px;line-height:8.97px;color:#505050;">P</span>
<div class="b " style="left:866.80px;top:53.50px;width:1.00px;height:6.50px;background:#d2d2d2;"></div>
<span class="t ch" style="left:835.61px;top:53.00px;font-size:6.9px;line-height:8.97px;color:#505050;">Q</span>
<div class="b " style="left:924.50px;top:53.50px;width:1.00px;height:6.50px;background:#d2d2d2;"></div>
<span class="t ch" style="left:893.66px;top:53.00px;font-size:6.9px;line-height:8.97px;color:#505050;">R</span>
<div class="b " style="left:984.50px;top:53.50px;width:1.00px;height:6.50px;background:#d2d2d2;"></div>
<span class="t ch" style="left:952.70px;top:53.00px;font-size:6.9px;line-height:8.97px;color:#505050;">S</span>
<div class="b " style="left:13.00px;top:53.50px;width:1.00px;height:6.50px;background:#d2d2d2;"></div>
<div class="b" style="left:7.2px;top:55.2px;width:0;height:0;border-left:4.2px solid transparent;border-bottom:4.2px solid #b8b8b8;"></div>
</div>
<div id="rowhdr">
<div class="b " style="left:0.00px;top:61.60px;width:13.90px;height:497.90px;background:#ececec;border-right:1px solid #c8c8c8;box-sizing:border-box;"></div>
<span class="t rh" style="left:5.08px;top:67.00px;font-size:6.9px;line-height:8.97px;color:#555;">1</span>
<div class="b " style="left:1.00px;top:75.10px;width:12.00px;height:1.00px;background:#d9d9d9;"></div>
<span class="t rh" style="left:5.08px;top:81.00px;font-size:6.9px;line-height:8.97px;color:#555;">2</span>
<div class="b " style="left:1.00px;top:89.60px;width:12.00px;height:1.00px;background:#d9d9d9;"></div>
<span class="t rh" style="left:5.08px;top:93.00px;font-size:6.9px;line-height:8.97px;color:#555;">3</span>
<div class="b " style="left:1.00px;top:100.90px;width:12.00px;height:1.00px;background:#d9d9d9;"></div>
<span class="t rh" style="left:5.08px;top:103.00px;font-size:6.9px;line-height:8.97px;color:#555;">4</span>
<div class="b " style="left:1.00px;top:111.50px;width:12.00px;height:1.00px;background:#d9d9d9;"></div>
<span class="t rh" style="left:5.08px;top:114.00px;font-size:6.9px;line-height:8.97px;color:#555;">5</span>
<div class="b " style="left:1.00px;top:122.70px;width:12.00px;height:1.00px;background:#d9d9d9;"></div>
<span class="t rh" style="left:5.08px;top:125.00px;font-size:6.9px;line-height:8.97px;color:#555;">6</span>
<div class="b " style="left:1.00px;top:133.70px;width:12.00px;height:1.00px;background:#d9d9d9;"></div>
<span class="t rh" style="left:5.08px;top:140.00px;font-size:6.9px;line-height:8.97px;color:#555;">7</span>
<div class="b " style="left:1.00px;top:148.80px;width:12.00px;height:1.00px;background:#d9d9d9;"></div>
<span class="t rh" style="left:5.08px;top:155.00px;font-size:6.9px;line-height:8.97px;color:#555;">8</span>
<div class="b " style="left:1.00px;top:162.90px;width:12.00px;height:1.00px;background:#d9d9d9;"></div>
<span class="t rh" style="left:5.08px;top:169.00px;font-size:6.9px;line-height:8.97px;color:#555;">9</span>
<div class="b " style="left:1.00px;top:177.70px;width:12.00px;height:1.00px;background:#d9d9d9;"></div>
<span class="t rh" style="left:3.16px;top:184.00px;font-size:6.9px;line-height:8.97px;color:#555;">10</span>
<div class="b " style="left:1.00px;top:192.10px;width:12.00px;height:1.00px;background:#d9d9d9;"></div>
<span class="t rh" style="left:3.42px;top:195.00px;font-size:6.9px;line-height:8.97px;color:#555;">11</span>
<div class="b " style="left:1.00px;top:203.40px;width:12.00px;height:1.00px;background:#d9d9d9;"></div>
<span class="t rh" style="left:3.16px;top:206.00px;font-size:6.9px;line-height:8.97px;color:#555;">12</span>
<div class="b " style="left:1.00px;top:214.10px;width:12.00px;height:1.00px;background:#d9d9d9;"></div>
<span class="t rh" style="left:3.16px;top:217.00px;font-size:6.9px;line-height:8.97px;color:#555;">13</span>
<div class="b " style="left:1.00px;top:225.10px;width:12.00px;height:1.00px;background:#d9d9d9;"></div>
<span class="t rh" style="left:3.16px;top:228.00px;font-size:6.9px;line-height:8.97px;color:#555;">14</span>
<div class="b " style="left:1.00px;top:236.10px;width:12.00px;height:1.00px;background:#d9d9d9;"></div>
<span class="t rh" style="left:3.16px;top:239.00px;font-size:6.9px;line-height:8.97px;color:#555;">15</span>
<div class="b " style="left:1.00px;top:247.40px;width:12.00px;height:1.00px;background:#d9d9d9;"></div>
<span class="t rh" style="left:3.16px;top:250.00px;font-size:6.9px;line-height:8.97px;color:#555;">16</span>
<div class="b " style="left:1.00px;top:258.10px;width:12.00px;height:1.00px;background:#d9d9d9;"></div>
<span class="t rh" style="left:3.16px;top:261.00px;font-size:6.9px;line-height:8.97px;color:#555;">17</span>
<div class="b " style="left:1.00px;top:269.10px;width:12.00px;height:1.00px;background:#d9d9d9;"></div>
<span class="t rh" style="left:3.16px;top:272.00px;font-size:6.9px;line-height:8.97px;color:#555;">18</span>
<div class="b " style="left:1.00px;top:280.40px;width:12.00px;height:1.00px;background:#d9d9d9;"></div>
<span class="t rh" style="left:3.16px;top:282.00px;font-size:6.9px;line-height:8.97px;color:#555;">19</span>
<div class="b " style="left:1.00px;top:290.10px;width:12.00px;height:1.00px;background:#d9d9d9;"></div>
<span class="t rh" style="left:3.16px;top:297.00px;font-size:6.9px;line-height:8.97px;color:#555;">20</span>
<div class="b " style="left:1.00px;top:305.70px;width:12.00px;height:1.00px;background:#d9d9d9;"></div>
<span class="t rh" style="left:3.16px;top:308.00px;font-size:6.9px;line-height:8.97px;color:#555;">21</span>
<div class="b " style="left:1.00px;top:316.40px;width:12.00px;height:1.00px;background:#d9d9d9;"></div>
<span class="t rh" style="left:3.16px;top:323.00px;font-size:6.9px;line-height:8.97px;color:#555;">22</span>
<div class="b " style="left:1.00px;top:331.60px;width:12.00px;height:1.00px;background:#d9d9d9;"></div>
<span class="t rh" style="left:3.16px;top:338.00px;font-size:6.9px;line-height:8.97px;color:#555;">23</span>
<div class="b " style="left:1.00px;top:346.70px;width:12.00px;height:1.00px;background:#d9d9d9;"></div>
<span class="t rh" style="left:3.16px;top:353.00px;font-size:6.9px;line-height:8.97px;color:#555;">24</span>
<div class="b " style="left:1.00px;top:361.80px;width:12.00px;height:1.00px;background:#d9d9d9;"></div>
<span class="t rh" style="left:3.16px;top:369.00px;font-size:6.9px;line-height:8.97px;color:#555;">25</span>
<div class="b " style="left:1.00px;top:376.90px;width:12.00px;height:1.00px;background:#d9d9d9;"></div>
<span class="t rh" style="left:3.16px;top:380.00px;font-size:6.9px;line-height:8.97px;color:#555;">26</span>
<div class="b " style="left:1.00px;top:388.10px;width:12.00px;height:1.00px;background:#d9d9d9;"></div>
<span class="t rh" style="left:3.16px;top:391.00px;font-size:6.9px;line-height:8.97px;color:#555;">27</span>
<div class="b " style="left:1.00px;top:399.10px;width:12.00px;height:1.00px;background:#d9d9d9;"></div>
<span class="t rh" style="left:3.16px;top:402.00px;font-size:6.9px;line-height:8.97px;color:#555;">28</span>
<div class="b " style="left:1.00px;top:410.10px;width:12.00px;height:1.00px;background:#d9d9d9;"></div>
<span class="t rh" style="left:3.16px;top:413.00px;font-size:6.9px;line-height:8.97px;color:#555;">29</span>
<div class="b " style="left:1.00px;top:421.40px;width:12.00px;height:1.00px;background:#d9d9d9;"></div>
<span class="t rh" style="left:3.16px;top:427.00px;font-size:6.9px;line-height:8.97px;color:#555;">30</span>
<div class="b " style="left:1.00px;top:436.00px;width:12.00px;height:1.00px;background:#d9d9d9;"></div>
<span class="t rh" style="left:3.16px;top:438.00px;font-size:6.9px;line-height:8.97px;color:#555;">31</span>
<div class="b " style="left:1.00px;top:446.80px;width:12.00px;height:1.00px;background:#d9d9d9;"></div>
<span class="t rh" style="left:3.16px;top:449.00px;font-size:6.9px;line-height:8.97px;color:#555;">32</span>
<div class="b " style="left:1.00px;top:457.80px;width:12.00px;height:1.00px;background:#d9d9d9;"></div>
<span class="t rh" style="left:3.16px;top:464.00px;font-size:6.9px;line-height:8.97px;color:#555;">33</span>
<div class="b " style="left:1.00px;top:472.10px;width:12.00px;height:1.00px;background:#d9d9d9;"></div>
<span class="t rh" style="left:3.16px;top:478.00px;font-size:6.9px;line-height:8.97px;color:#555;">34</span>
<div class="b " style="left:1.00px;top:486.80px;width:12.00px;height:1.00px;background:#d9d9d9;"></div>
<span class="t rh" style="left:3.16px;top:493.00px;font-size:6.9px;line-height:8.97px;color:#555;">35</span>
<div class="b " style="left:1.00px;top:501.40px;width:12.00px;height:1.00px;background:#d9d9d9;"></div>
<span class="t rh" style="left:3.16px;top:508.00px;font-size:6.9px;line-height:8.97px;color:#555;">36</span>
<div class="b " style="left:1.00px;top:516.00px;width:12.00px;height:1.00px;background:#d9d9d9;"></div>
<span class="t rh" style="left:3.16px;top:522.00px;font-size:6.9px;line-height:8.97px;color:#555;">37</span>
<div class="b " style="left:1.00px;top:530.50px;width:12.00px;height:1.00px;background:#d9d9d9;"></div>
<span class="t rh" style="left:3.16px;top:537.00px;font-size:6.9px;line-height:8.97px;color:#555;">38</span>
<div class="b " style="left:1.00px;top:545.10px;width:12.00px;height:1.00px;background:#d9d9d9;"></div>
<span class="t rh" style="left:3.16px;top:552.00px;font-size:6.9px;line-height:8.97px;color:#555;">39</span>
</div>
<div id="vscroll">
<div class="b " style="left:987.00px;top:61.60px;width:13.00px;height:497.90px;background:#f8f8f8;border-left:1px solid #e2e2e2;box-sizing:border-box;"></div>
<div class="b" style="left:991.4px;top:54.4px;width:0;height:0;border-left:2.7px solid transparent;border-right:2.7px solid transparent;border-bottom:3.8px solid #505050;"></div>
<div class="b " style="left:991.30px;top:62.80px;width:5.50px;height:205.60px;background:#747474;border-radius:2.6px;"></div>
<div class="b" style="left:990.9px;top:553.4px;width:0;height:0;border-left:3.2px solid transparent;border-right:3.2px solid transparent;border-top:4.2px solid #444;"></div>
</div>
<div id="titlebar">
<div class="b " style="left:0.00px;top:0.00px;width:1000.00px;height:31.00px;background:linear-gradient(to bottom,#1a8249 0,#19814a 2px,#0f763d 3.2px,#0f773e 5px,#117c41 6.5px,#117c41 24.6px,#1a8249 26px,#1b834a 28px,#0c6b36 29px,#0c6b36 30.4px,#2a8a55 31px);"></div>
<span class="t " style="left:117.10px;top:11.00px;font-size:8.6px;line-height:11.18px;transform:scaleX(0.879);color:#fff;">Real Estate Broker Financial Model with DCF.xlsx  -  Excel</span>
<div class="b " style="left:385.40px;top:5.50px;width:239.70px;height:20.40px;background:#d1e6d8;border-radius:2px;"></div>
<span class="t " style="left:412.40px;top:10.00px;font-size:8.6px;line-height:11.18px;transform:scaleX(0.980);color:#2b7a4b;">Search</span>
<svg class="b" style="left:393.5px;top:9.5px" width="12" height="12" viewBox="0 0 12 12"><circle cx="7" cy="4.6" r="3.1" fill="none" stroke="#2b7a4b" stroke-width="0.9"/><path d="M4.8 6.9 L1.6 10.2" stroke="#2b7a4b" stroke-width="1" stroke-linecap="round"/></svg>
<svg class="b" style="left:9px;top:8px" width="110" height="16" viewBox="0 0 110 16" fill="none" stroke="#fff" stroke-width="0.9" stroke-linecap="round" stroke-linejoin="round">
<rect x="4.8" y="2.9" width="5.8" height="9.4" rx="0.8" fill="#dcefe3" stroke="#e9f3ec" stroke-width="0.5"/>
<rect x="1.7" y="5" width="5.6" height="5.6" rx="0.7" fill="#fff" stroke="#fff" stroke-width="0.5"/>
<path d="M3.3 6.4 L5.7 9.2 M5.7 6.4 L3.3 9.2" stroke="#117d42" stroke-width="0.9"/>
<path d="M22.6 2.6 H30.6 L32.2 4.2 V12.8 H22.6 Z"/>
<path d="M24.6 2.8 V6.2 H29.8 V2.8"/>
<path d="M24.6 12.8 V8.8 H30.2 V12.8"/>
<path d="M42 3 V7.2 H46.2"/>
<path d="M42.3 7 C44 3.6 48.4 2.6 50.2 5.4 C51.6 7.8 49.6 10.4 46 13.2" stroke-width="1"/>
<path d="M55.4 8.2 H58" stroke-width="0.9"/>
<g opacity="0.38"><path d="M74.6 3 V7.2 H70.4"/><path d="M74.3 7 C72.6 3.6 68.2 2.6 66.4 5.4 C65 7.8 67 10.4 70.6 13.2" stroke-width="1"/><path d="M81.4 8.2 H84"/></g>
<path d="M93.4 6.2 H98.2" stroke-width="0.9"/>
<path d="M93.6 8.6 H98 L95.8 10.8 Z" fill="#fff" stroke-width="0.5"/>
</svg>
<div class="b" style="left:884.3px;top:7.8px;width:15.2px;height:15.2px;border-radius:50%;background:#3c2f8f;"></div>
<span class="t " style="left:888.15px;top:12.00px;font-size:5.4px;line-height:7.02px;color:#fff;">RS</span>
<svg class="b" style="left:910px;top:6px" width="86" height="18" viewBox="0 0 86 18" fill="none" stroke="#fff" stroke-width="0.9" stroke-linecap="round">
<path d="M8.8 8.8 H15.8"/>
<rect x="39.8" y="7.4" width="5.4" height="5.4" rx="1.2"/>
<path d="M41.6 6 H45.4 Q46.8 6 46.8 7.4 V11.2"/>
<path d="M71.2 5.8 L78.4 13 M78.4 5.8 L71.2 13"/>
</svg>
</div>
<div id="ribbon">
<div class="b " style="left:0.00px;top:31.00px;width:1000.00px;height:17.60px;background:#e8eaef;"></div>
<span class="t " style="left:13.70px;top:37.00px;font-size:8.7px;line-height:11.31px;transform:scaleX(0.929);color:#2b2b2b;">File</span>
<span class="t " style="left:44.90px;top:37.00px;font-size:8.7px;line-height:11.31px;transform:scaleX(0.992);color:#2b2b2b;">Home</span>
<span class="t " style="left:80.60px;top:37.00px;font-size:8.7px;line-height:11.31px;transform:scaleX(1.049);color:#2b2b2b;">Insert</span>
<span class="t " style="left:116.50px;top:37.00px;font-size:8.7px;line-height:11.31px;transform:scaleX(0.991);color:#2b2b2b;">Draw</span>
<span class="t " style="left:149.50px;top:37.00px;font-size:8.7px;line-height:11.31px;transform:scaleX(0.996);color:#2b2b2b;">Page Layout</span>
<span class="t " style="left:211.60px;top:37.00px;font-size:8.7px;line-height:11.31px;transform:scaleX(0.994);color:#2b2b2b;">Formulas</span>
<span class="t " style="left:259.90px;top:37.00px;font-size:8.7px;line-height:11.31px;transform:scaleX(1.013);color:#2b2b2b;">Data</span>
<span class="t " style="left:292.60px;top:37.00px;font-size:8.7px;line-height:11.31px;transform:scaleX(0.926);color:#2b2b2b;">Review</span>
<span class="t " style="left:333.40px;top:37.00px;font-size:8.7px;line-height:11.31px;transform:scaleX(0.963);color:#2b2b2b;">View</span>
<span class="t " style="left:365.00px;top:37.00px;font-size:8.7px;line-height:11.31px;color:#2b2b2b;">Developer</span>
<span class="t " style="left:418.10px;top:37.00px;font-size:8.7px;line-height:11.31px;transform:scaleX(1.007);color:#2b2b2b;">Help</span>
<span class="t " style="left:449.60px;top:37.00px;font-size:8.7px;line-height:11.31px;transform:scaleX(0.990);color:#2b2b2b;">Power Pivot</span>
<div class="b " style="left:946.10px;top:33.60px;width:46.20px;height:14.90px;background:#117d42;border-radius:2.4px;"></div>
<span class="t " style="left:959.40px;top:36.00px;font-size:8.6px;line-height:11.18px;transform:scaleX(0.946);color:#fff;">Share</span>
<svg class="b" style="left:947px;top:35px" width="46" height="12" viewBox="0 0 46 12" fill="none" stroke="#fff" stroke-width="0.85" stroke-linecap="round" stroke-linejoin="round">
<path d="M3.6 5.2 H2 V10.4 H9 V8"/><path d="M4.4 8 C4.6 5.6 6 4.6 7.6 4.6 V3 L10 5.4 L7.6 7.6 V6.2 C6.2 6.2 5.2 6.8 4.4 8 Z"/>
<path d="M39.4 5.4 L41 7 L42.6 5.4"/></svg>
</div>
<div id="tabbar">
<div class="b " style="left:0.00px;top:559.50px;width:1000.00px;height:18.50px;background:#e6e8f0;"></div>
<div class="b " style="left:73.30px;top:563.20px;width:101.00px;height:15.00px;background:#ffffff;border-radius:3px;"></div>
<span class="t " style="left:80.00px;top:565.00px;font-size:9.8px;line-height:12.74px;transform:scaleX(0.930);color:#2a2a2a;">Working Capitol 2045</span>
<div class="b " style="left:180.50px;top:563.20px;width:60.00px;height:15.00px;background:#ffff8f;border-radius:3px;"></div>
<span class="t " style="left:186.30px;top:565.00px;font-size:9.8px;line-height:12.74px;transform:scaleX(0.844);color:#2a2a2a;">CAPEX 2045</span>
<span class="t " style="left:253.75px;top:565.00px;font-size:9.8px;line-height:12.74px;transform:scaleX(0.898);color:#2a2a2a;">Key Metrics Charts</span>
<div class="b " style="left:339.50px;top:563.20px;width:99.25px;height:15.00px;background:#ffff8f;border-radius:3px;"></div>
<span class="t " style="left:347.00px;top:565.00px;font-size:9.8px;line-height:12.74px;transform:scaleX(0.899);color:#2a2a2a;">Salaries Assumptions</span>
<span class="t " style="left:449.50px;top:565.00px;font-size:9.8px;line-height:12.74px;transform:scaleX(0.881);color:#2a2a2a;">Sales Summary Charts</span>
<span class="t " style="left:556.75px;top:565.00px;font-size:9.8px;line-height:12.74px;transform:scaleX(0.850);color:#2a2a2a;">KPI Charts</span>
<span class="t " style="left:615.00px;top:565.00px;font-size:9.8px;line-height:12.74px;transform:scaleX(0.780);color:#2a2a2a;">BEA</span>
<div class="b " style="left:641.25px;top:563.20px;width:48.25px;height:15.00px;background:#ffff8f;border-radius:3px;"></div>
<span class="t " style="left:647.50px;top:565.00px;font-size:9.8px;line-height:12.74px;transform:scaleX(0.837);color:#2a2a2a;">Expenses</span>
<div class="b " style="left:695.50px;top:563.20px;width:89.00px;height:15.00px;background:#ffff8f;border-radius:3px;"></div>
<span class="t " style="left:701.75px;top:565.00px;font-size:9.8px;line-height:12.74px;transform:scaleX(0.890);color:#2a2a2a;">COGS Assumptions</span>
<div class="b " style="left:790.00px;top:561.00px;width:58.00px;height:17.00px;background:#ffffff;border-radius:3px 3px 0 0;"></div>
<span class="t " style="left:797.00px;top:564.00px;font-size:9.8px;line-height:12.74px;transform:scaleX(0.880);color:#1d1d1d;font-weight:700;">DCF Model</span>
<div class="b " style="left:797.00px;top:574.80px;width:45.00px;height:1.20px;background:#117d42;"></div>
<span class="t " style="left:859.00px;top:565.00px;font-size:9.8px;line-height:12.74px;transform:scaleX(0.787);color:#2a2a2a;">CAPS</span>
<svg class="b" style="left:10px;top:563px" width="60" height="14" viewBox="0 0 60 14" fill="none" stroke="#8a8a8a" stroke-width="1" stroke-linecap="round" stroke-linejoin="round">
<path d="M9.6 4 L7 7 L9.6 10"/><path d="M27.6 4 L30.2 7 L27.6 10"/>
<g fill="#444" stroke="none"><circle cx="47.2" cy="7.2" r="0.85"/><circle cx="49.6" cy="7.2" r="0.85"/><circle cx="52" cy="7.2" r="0.85"/></g></svg>
<svg class="b" style="left:880px;top:563px" width="110" height="14" viewBox="0 0 110 14" fill="#444" stroke="none">
<circle cx="7.4" cy="7.2" r="0.8"/><circle cx="9.8" cy="7.2" r="0.8"/><circle cx="12.2" cy="7.2" r="0.8"/>
<path d="M27 7.1 H35.6 M31.3 2.8 V11.4" stroke="#333" stroke-width="0.9" fill="none"/>
<circle cx="52" cy="4.4" r="0.75"/><circle cx="52" cy="7.2" r="0.75"/><circle cx="52" cy="10" r="0.75"/>
<path d="M70.3 4 L66 6.8 L70.3 9.6 Z"/><rect x="73.5" y="4" width="17.1" height="5.6" rx="2.6" fill="#5e5e5e"/>
<path d="M101 4 L105.3 6.8 L101 9.6 Z"/></svg>
</div>
<div id="statusbar">
<div class="b " style="left:0.00px;top:578.00px;width:1000.00px;height:17.00px;background:#f1f1f1;border-top:2.2px solid #f7f7f7;box-sizing:border-box;"></div>
<div class="b " style="left:0.00px;top:594.00px;width:1000.00px;height:1.00px;background:#6a6a6a;"></div>
<span class="t " style="left:7.50px;top:583.00px;font-size:7.6px;line-height:9.88px;transform:scaleX(0.834);color:#5a5a5a;">Ready</span>
<span class="t " style="left:72.50px;top:583.00px;font-size:7.4px;line-height:9.62px;transform:scaleX(0.887);color:#222;font-weight:700;">Accessibility: Investigate</span>
<svg class="b" style="left:38px;top:581px" width="34" height="13" viewBox="0 0 34 13" fill="none" stroke="#444" stroke-width="0.8" stroke-linecap="round" stroke-linejoin="round">
<rect x="2.2" y="2.2" width="8.4" height="8.4" rx="0.8"/><path d="M2.4 4.4 H10.4 M4.6 2.4 V4.2 M6.4 2.4 V4.2 M8.2 2.4 V4.2"/><circle cx="6.6" cy="7.6" r="1.7" fill="#444"/>
<circle cx="26.6" cy="2.6" r="1" /><path d="M23.4 4.6 H29.8 M26.6 4.6 V7.6 M26.6 7.6 L24.6 11 M26.6 7.6 L28 9"/><circle cx="29.6" cy="9.6" r="1.7"/><path d="M28.9 9.6 L29.5 10.2 L30.4 9"/></svg>
<div class="b " style="left:808.50px;top:581.00px;width:23.00px;height:13.00px;background:#d4d4d4;"></div>
<svg class="b" style="left:808px;top:581px" width="72" height="13" viewBox="0 0 72 13" fill="none" stroke="#444" stroke-width="0.8">
<rect x="6.6" y="2.2" width="9" height="8.6"/><path d="M9.6 2.2 V10.8 M12.6 2.2 V10.8 M6.6 5.1 H15.6 M6.6 8 H15.6"/>
<rect x="32.6" y="2.2" width="9.4" height="8.6"/><path d="M35 2.2 V10.8 M39.6 2.2 V10.8" stroke-width="1.3"/><path d="M37.3 2.2 V10.8"/>
<rect x="58.8" y="2.2" width="9" height="8.6"/><path d="M61.4 2.2 V6.2 H65.6 V2.2"/></svg>
<div class="b " style="left:889.00px;top:587.00px;width:4.00px;height:0.90px;background:#555;"></div>
<div class="b " style="left:896.50px;top:587.10px;width:64.50px;height:0.70px;background:#8a8a8a;"></div>
<div class="b " style="left:920.60px;top:583.80px;width:2.80px;height:7.60px;background:#555;border-radius:1px;"></div>
<div class="b " style="left:927.70px;top:585.60px;width:0.70px;height:3.80px;background:#777;"></div>
<div class="b " style="left:965.00px;top:587.00px;width:4.20px;height:0.80px;background:#555;"></div>
<div class="b " style="left:966.70px;top:585.30px;width:0.80px;height:4.20px;background:#555;"></div>
<span class="t " style="left:978.50px;top:583.00px;font-size:7.2px;line-height:9.36px;transform:scaleX(0.855);color:#444;">81%</span>
</div>
</body></html>
